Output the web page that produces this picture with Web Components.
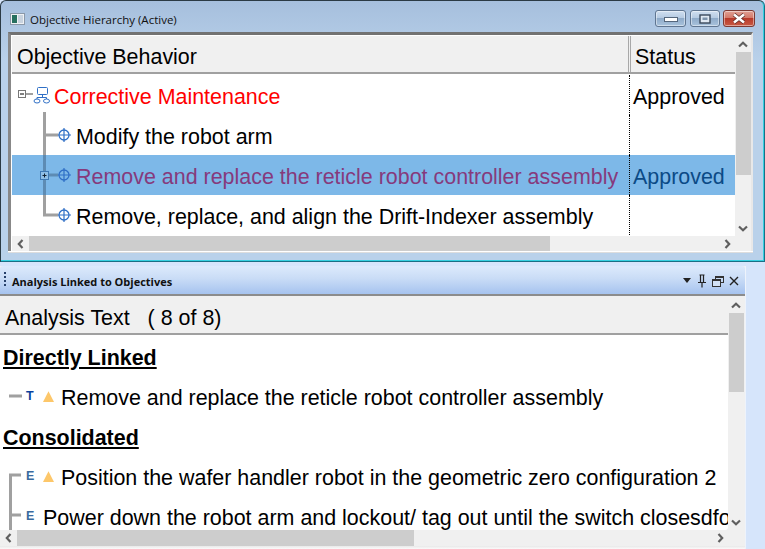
<!DOCTYPE html>
<html><head><meta charset="utf-8">
<style>
html,body{margin:0;padding:0;width:765px;height:549px;overflow:hidden;background:#d6e5fb;font-family:"Liberation Sans",Arial,sans-serif}
</style></head><body>
<app-shell>
  <mdi-window title="Objective Hierarchy (Active)">
    <scroll-pane vthumb="0,123" hthumb="1,521">
      <tree-header><span>Objective Behavior</span><span slot="status">Status</span></tree-header>
      <tree-row kind="root" status="Approved" color="#ff0000">Corrective Maintenance</tree-row>
      <tree-row kind="first">Modify the robot arm</tree-row>
      <tree-row kind="mid" selected status="Approved">Remove and replace the reticle robot controller assembly</tree-row>
      <tree-row kind="last">Remove, replace, and align the Drift-Indexer assembly</tree-row>
    </scroll-pane>
  </mdi-window>
  <dock-panel title="Analysis Linked to Objectives">
    <analysis-header>Analysis Text &nbsp; ( 8 of 8)</analysis-header>
    <group-head>Directly Linked</group-head>
    <analysis-row line="single" letter="T" letter-color="#0a3f9c" warn>Remove and replace the reticle robot controller assembly</analysis-row>
    <group-head>Consolidated</group-head>
    <analysis-row line="top" letter="E" letter-color="#3a6a9e" warn>Position the wafer handler robot in the geometric zero configuration 2</analysis-row>
    <analysis-row line="cut" letter="E" letter-color="#3a6a9e">Power down the robot arm and lockout/ tag out until the switch closesdfo</analysis-row>
  </dock-panel>
</app-shell>
<script>
const chev = {
  up:'<svg width="10" height="7" viewBox="0 0 10 7"><path d="M1 5.5 5 1.8 9 5.5" fill="none" stroke="#5f5f5f" stroke-width="2.2"/></svg>',
  down:'<svg width="10" height="7" viewBox="0 0 10 7"><path d="M1 1.5 5 5.2 9 1.5" fill="none" stroke="#5f5f5f" stroke-width="2.2"/></svg>',
  left:'<svg width="7" height="10" viewBox="0 0 7 10"><path d="M5.5 1 1.8 5 5.5 9" fill="none" stroke="#5f5f5f" stroke-width="2.2"/></svg>',
  right:'<svg width="7" height="10" viewBox="0 0 7 10"><path d="M1.5 1 5.2 5 1.5 9" fill="none" stroke="#5f5f5f" stroke-width="2.2"/></svg>'
};
function def(name, css, html){
  customElements.define(name, class extends HTMLElement{
    connectedCallback(){
      if(this.shadowRoot) return;
      const h=typeof html==='function'?html(this):html;
      const r=this.attachShadow({mode:'open'});
      r.innerHTML='<style>'+css+'</style>'+h;
    }
  });
}
def('app-shell',':host{display:flex;flex-direction:column;width:765px;height:549px;background:#d6e5fb;overflow:hidden}','<slot></slot>');
def('win-btn',`:host{display:flex;align-items:center;justify-content:center;height:17px;box-sizing:border-box;border:1px solid #5f7590;border-radius:3px;box-shadow:inset 0 0 0 1px rgba(255,255,255,.45);background:linear-gradient(#d0dff0 0,#b6cbe2 45%,#8fabc9 50%,#a9c3dd 100%)}
:host([kind=close]){border-color:#7c3a33;background:linear-gradient(#e0a094 0,#d47a6a 45%,#b83a2a 50%,#c95a44 100%)}`,
 t=>{const k=t.getAttribute('kind');
  if(k==='min')return '<svg width="14" height="6" viewBox="0 0 14 6"><rect x=".5" y="1.5" width="13" height="4" fill="#fff" stroke="#55677c"/></svg>';
  if(k==='max')return '<svg width="12" height="10" viewBox="0 0 12 10"><rect x="1" y="1" width="10" height="8" fill="#dfe8f2" stroke="#39495c" stroke-width="1.4"/><rect x="3.5" y="3.5" width="5" height="2.5" fill="#7d93ab"/></svg>';
  return '<svg width="16" height="11" viewBox="0 0 16 11"><path d="M3 1.5 13 9.5M13 1.5 3 9.5" stroke="#5a2a25" stroke-width="4"/><path d="M3 1.5 13 9.5M13 1.5 3 9.5" stroke="#fff" stroke-width="2.6"/></svg>';
 });
def('mdi-window',`:host{display:flex;flex-direction:column;box-sizing:border-box;width:765px;height:262px;flex:none;background:linear-gradient(#a6bfdd 0,#b9d1ea 60px);border:1px solid #2b3a44;border-bottom-color:#1a6f85;border-right-color:#1a6f85;border-radius:6px 6px 0 0;box-shadow:inset 0 -1px 0 #35d0e0,inset -1px 0 0 #35d0e0}
.bar{display:flex;align-items:center;height:31px;box-sizing:border-box;flex:none;padding:4px 9px 0 9px}
.ic{width:15px;height:12px;flex:none;display:block;margin-right:5px}
.t{flex:1;font:11.5px "Open Sans","Noto Sans","Liberation Sans",sans-serif;color:#111;margin-top:2px}
win-btn.a{width:31px;margin-right:4px}win-btn.m{margin-right:3px;width:30px}win-btn.c{width:32px}
.body{flex:none;height:219px;margin:0 11px 0 7px;box-sizing:border-box;background:#fff;border-style:solid;border-width:3px 2px 0 3px;border-color:#727272 #e8e8e8 #e8e8e8 #888;box-shadow:0 1px 0 #fff,0 2px 0 #ddd;padding:1px 0 0 1px;display:flex}`,
 t=>`<div class="bar"><svg class="ic" viewBox="0 0 15 12"><rect x=".5" y=".5" width="14" height="11" fill="#eef1f4" stroke="#8a98a8"/><rect x="2" y="2" width="5" height="8" fill="#27705f"/><rect x="8" y="2" width="5" height="8" fill="#c8d3df"/></svg><span class="t">${t.getAttribute('title')}</span><win-btn class="a" kind="min"></win-btn><win-btn class="m" kind="max"></win-btn><win-btn class="c" kind="close"></win-btn></div><div class="body"><slot></slot></div>`);
def('scroll-bar',`:host{display:flex;background:#f0f0f0;flex:none;min-width:0;min-height:0}
:host([dir=v]){flex-direction:column;width:16px}
.a{flex:none;display:flex;align-items:center;justify-content:center}
:host([dir=v]) .a{height:16px}:host([dir=h]) .a{width:16px}
.tr{flex:1;min-width:0;min-height:0;display:flex}:host([dir=v]) .tr{flex-direction:column;padding-left:1px}
.th{background:#cdcdcd;flex:none}`,
 t=>{const v=t.getAttribute('dir')==='v',s=+t.getAttribute('start'),l=+t.getAttribute('len');
  return `<div class="a">${v?chev.up:chev.left}</div><div class="tr"><div style="flex:none;${v?'height':'width'}:${s}px"></div><div class="th" style="${v?'height':'width'}:${l}px"></div></div><div class="a">${v?chev.down:chev.right}</div>`;});
def('scroll-pane',`:host{display:grid;grid-template-columns:1fr 16px;grid-template-rows:1fr 15px;flex:1;min-width:0}
.c{overflow:hidden;min-width:0;min-height:0}
.corner{background:#f0f0f0}`,
 t=>`<div class="c"><slot></slot></div><scroll-bar dir="v" start="${t.getAttribute('vthumb').split(',')[0]}" len="${t.getAttribute('vthumb').split(',')[1]}"></scroll-bar><scroll-bar dir="h" start="${t.getAttribute('hthumb').split(',')[0]}" len="${t.getAttribute('hthumb').split(',')[1]}"></scroll-bar><div class="corner"></div>`);
def('tree-header',`:host{display:grid;grid-template-columns:619px 1fr;height:38px;box-sizing:border-box;background:#f0f0f0;border-bottom:2px solid #a0a0a0;font-size:21.45px;color:#000;margin-bottom:1px}
.a{padding:6px 0 0 5px;display:flex;align-items:center;height:36px;box-sizing:border-box;border-right:3px double #a8a8a8}
.b{padding:6px 0 0 4px;display:flex;align-items:center;height:36px;box-sizing:border-box}`,
 '<div class="a"><slot></slot></div><div class="b"><slot name="status"></slot></div>');
const blue='#2f6fc6';
const target=`<svg width="14" height="14" viewBox="0 0 14 14" style="flex:none"><circle cx="7" cy="7" r="5" fill="none" stroke="${blue}" stroke-width="1.3"/><path d="M7 0V14M0 7H14" stroke="${blue}" stroke-width="1.2"/></svg>`;
def('tree-row',`:host{display:grid;grid-template-columns:618px 1fr;height:40px;font-size:21.45px;color:#000;position:relative;white-space:nowrap}
:host([selected]){background:#7db8e8;color:#863a7c}
.a{display:flex;align-items:center;overflow:hidden;border-right:1px dotted #000}
.b{display:flex;align-items:center;padding:4px 0 0 3px}
:host([selected]) .b{color:#0b4a86}
.lab{margin:4px 0 0 5px}
.ind{padding-left:45px;display:flex;align-items:center}
.root{padding-left:6px;display:flex;align-items:center}
svg.lines{position:absolute;left:0;top:0;overflow:visible;pointer-events:none}`,
 t=>{const k=t.getAttribute('kind'),st=t.getAttribute('status')||'',col=t.getAttribute('color');
  const sel=t.hasAttribute('selected');const g=sel?'#5d8bb3':'#a0a0a0';
  let lines='';
  if(k==='root') return `<div class="a" style="${col?'color:'+col:''}"><div class="root"><svg width="33" height="20" viewBox="0 0 33 20" style="flex:none;margin-top:-1px"><path d="M8 9H15" stroke="#a0a0a0" stroke-width="2"/><rect x=".5" y="5.5" width="7" height="7" fill="#fff" stroke="#777"/><path d="M2 9H6" stroke="#000"/><g fill="#fff" stroke="${blue}"><rect x="19.5" y="2.5" width="10" height="7" rx="1"/><ellipse cx="19" cy="16" rx="3" ry="2"/><ellipse cx="28.5" cy="16" rx="3" ry="2"/></g><path d="M24.5 10V12.5M19 14V12.5H28.5V14" fill="none" stroke="${blue}"/></svg><span style="margin:4px 0 0 3px">${t.innerHTML}</span></div></div><div class="b">${st}</div>`;
  if(k==='first') lines=`<path d="M32.5 -3V40M32.5 20H46" stroke="${g}" stroke-width="3" fill="none"/>`;
  if(k==='mid') lines=`<path d="M32.5 0V40M32.5 20H46" stroke="${g}" stroke-width="3" fill="none"/><rect x="28.5" y="16.5" width="8" height="8" fill="#8fbfe6" stroke="#3e7ab5"/><path d="M30.5 20.5H34.5M32.5 18.5V22.5" stroke="#123"/>`;
  if(k==='last') lines=`<path d="M32.5 0V20H46" stroke="${g}" stroke-width="3" fill="none"/>`;
  return `<div class="a"><div class="ind">${target}<span class="lab">${t.innerHTML}</span></div></div><div class="b">${st}</div><svg class="lines" width="60" height="40" viewBox="0 0 60 40">${lines}</svg>`;
 });
def('dock-panel',`:host{display:flex;flex-direction:column;width:745px;height:283px;margin-top:4px;flex:none;background:#f0f0f0;box-shadow:1px 0 0 #eef3fb}
.bar{flex:none;display:flex;align-items:center;background:linear-gradient(#dceafc,#c9dcf6 45%,#a6c3ef);border-bottom:2px solid #8c8c8c;padding-right:6px;height:28px;border-radius:3px 3px 0 0}
.grip{width:2px;height:16px;margin:0 6px 0 4px;background:repeating-linear-gradient(#26406a 0 2px,transparent 2px 4px)}
.t{flex:1;font:bold 11px "Open Sans","Noto Sans","Liberation Sans",sans-serif;color:#111;margin-top:2px}
.ic{display:flex;align-items:center;gap:5px;margin-top:2px}
.body{flex:1;display:grid;grid-template-columns:1fr 16px;grid-template-rows:1fr 16px;background:#f0f0f0;min-height:0;padding:1px 1px 0 0}
.c{background:#fff;overflow:hidden;min-width:0;min-height:0;border-radius:0 0 3px 0}
.foot{height:3px;flex:none;background:linear-gradient(#e9e9e9,#fafafa)}`,
 t=>`<div class="bar"><i class="grip"></i><span class="t">${t.getAttribute('title')}</span><span class="ic">
 <svg width="10" height="6" viewBox="0 0 10 6"><path d="M1 0H9L5 5Z" fill="#222"/></svg>
 <svg width="10" height="14" viewBox="0 0 10 14"><path d="M2.5 1H7.5M3.5 1V8M6.5 1V8M1 8.5H9M5 9V13.5" stroke="#222" fill="none" stroke-width="1.2"/></svg>
 <svg width="12" height="12" viewBox="0 0 12 12"><rect x="3.5" y="1.5" width="8" height="6" fill="none" stroke="#333"/><path d="M3.5 2.5H11.5" stroke="#333"/><rect x=".5" y="4.5" width="8" height="7" fill="#d3e2f6" stroke="#333"/><path d="M.5 5.5H8.5" stroke="#333"/></svg>
 <svg width="10" height="10" viewBox="0 0 10 10"><path d="M1 1 9 9M9 1 1 9" stroke="#222" stroke-width="1.4"/></svg></span></div>
 <div class="body"><div class="c"><slot></slot></div><scroll-bar dir="v" start="0" len="79"></scroll-bar><scroll-bar dir="h" start="1" len="397"></scroll-bar><div></div></div><div class="foot"></div>`);
def('analysis-header',`:host{display:flex;align-items:center;height:38px;box-sizing:border-box;background:#f0f0f0;border-bottom:2px solid #a0a0a0;padding:6px 0 0 5px;font-size:21.45px;color:#000;white-space:pre}`,'<slot></slot>');
def('group-head',`:host{display:flex;align-items:center;height:40px;padding:6px 0 0 3px;box-sizing:border-box;font-size:21.45px;font-weight:bold;color:#000}`,'<span style="text-decoration:underline"><slot></slot></span>');
def('analysis-row',`:host{display:flex;align-items:center;height:40px;position:relative;font-size:21.45px;color:#000;white-space:nowrap}
.l{font-weight:bold;font-size:12.5px;position:absolute;left:26px;top:14px}
.tx{padding-top:6px}
svg.lines{position:absolute;left:0;top:0;overflow:visible}`,
 t=>{const k=t.getAttribute('line'),g='#a0a0a0';
  let p='';
  if(k==='single') p=`<path d="M9 21H22" stroke="${g}" stroke-width="3"/>`;
  if(k==='top') p=`<path d="M21 20H10.5V40" stroke="${g}" stroke-width="3" fill="none"/>`;
  if(k==='cut') p=`<path d="M10.5 0V40M10.5 20H21" stroke="${g}" stroke-width="3" fill="none"/>`;
  const w=t.hasAttribute('warn');
  return `<svg class="lines" width="30" height="40" viewBox="0 0 30 40">${p}</svg><span class="l" style="color:${t.getAttribute('letter-color')}">${t.getAttribute('letter')}</span><span style="width:43px;flex:none"></span>${w?'<svg width="11" height="11" viewBox="0 0 11 11" style="flex:none;margin:3px 7px 0 0"><path d="M5.5 .3 11 11H0Z" fill="#fdc76a"/></svg>':''}<span class="tx"><slot></slot></span>`;});
</script>
</body></html>
